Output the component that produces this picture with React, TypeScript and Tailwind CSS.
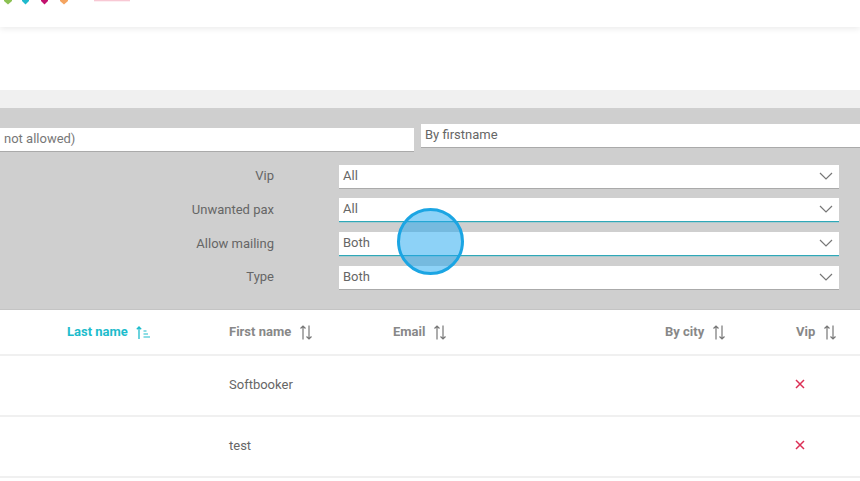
const filters = [
  { label: 'Vip', value: 'All', focused: false, mt: 'mt-[13px]', labelClass: 'mb-[2px]' },
  { label: 'Unwanted pax', value: 'All', focused: true, mt: 'mt-[9px]', labelClass: 'mb-0' },
  { label: 'Allow mailing', value: 'Both', focused: true, mt: 'mt-[10px]', labelClass: 'mb-0' },
  { label: 'Type', value: 'Both', focused: false, mt: 'mt-[10px]', labelClass: 'mb-[2px]' },
];

const rows = ['Softbooker', 'test'];

function SortIcon() {
  return (
    <svg width="14" height="15" viewBox="0 0 14 15" fill="none" stroke="#777" strokeWidth="1.2" className="ml-[8px]">
      <path d="M4 14.500V1M1.500 3.500 4 1l2.500 2.500" />
      <path d="M10 .5V14M7.500 11.500 10 14l2.500-2.500" />
    </svg>
  );
}

function SortedIcon() {
  return (
    <svg width="14" height="13" viewBox="0 0 14 13" fill="none" stroke="#1cbccc" strokeWidth="1.300" className="ml-[8px]">
      <path d="M3 13V1M.8 3.200 3 1l2.200 2.200" />
      <path d="M7.500 5h3M7.500 8h4.500M7.500 11h6.500" strokeWidth="1.100" />
    </svg>
  );
}

function Chevron() {
  return (
    <svg width="14" height="8" viewBox="0 0 14 8" fill="none" stroke="#777" strokeWidth="1.2" className="mb-[2px]">
      <path d="M1 1l6 6 6-6" />
    </svg>
  );
}

function Logo() {
  return (
    <svg width="140" height="6" viewBox="0 0 140 6" className="block">
      <path d="M4 0h8v1l-4 3.500-4-3.500z" fill="#8cc152" />
      <path d="M22 0h7v1l-3.500 3.500L22 1z" fill="#1fb9cc" />
      <path d="M41 0h7v1l-3.500 3.500L41 1z" fill="#c2116e" />
      <path d="M60 0h8v1l-4 3.500-4-3.500z" fill="#f4a460" />
      <rect x="94" y="0" width="36" height="1.300" fill="#f8c8d4" />
    </svg>
  );
}

export default function App() {
  return (
    <div className="w-[860px] h-[481px] overflow-hidden bg-white relative font-['Roboto',sans-serif] text-[13px] text-[#666]">
      <div className="h-[27px] bg-white shadow-[0_2px_6px_rgba(0,0,0,0.08)] relative">
        <Logo />
      </div>
      <div className="h-[63px] bg-white" />
      <div className="h-[18px] bg-[#f0f0f0]" />

      <div className="h-[202px] bg-[#cfcfcf] border-b border-[#c4c4c4]">
        <div className="flex items-start pt-[16px]">
          <div className="mt-[4px] h-[24px] w-[414px] bg-white border-b border-[#aaaaaa] pl-[4px] leading-[21px] text-[#777]">
            not allowed)
          </div>
          <div className="ml-[7px] h-[24px] flex-1 bg-white border-b border-[#aaaaaa] pl-[4px] leading-[21px]">
            By firstname
          </div>
        </div>
        {filters.map((f) => (
          <div key={f.label} className={`flex items-center ${f.mt}`}>
            <div className={`w-[274px] text-right text-[#666] ${f.labelClass}`}>{f.label}</div>
            <div
              className={`ml-[65px] w-[500px] h-[24px] bg-white border-b flex items-center justify-between pl-[4px] pr-[6px] ${
                f.focused ? 'border-[#2fa8b8] shadow-[0_1px_0_rgba(31,185,204,0.2)]' : 'border-[#aaaaaa]'
              }`}
            >
              <span className="mb-[1px]">{f.value}</span>
              <Chevron />
            </div>
          </div>
        ))}
      </div>

      <div className="h-[46px] grid grid-cols-[162px_164px_272px_131px_1fr] pl-[67px] items-center border-b-2 border-[#f0f0f0] font-bold text-[#888] text-[13px]">
        <div className="flex items-center text-[#1cbccc]">
          Last name
          <SortedIcon />
        </div>
        <div className="flex items-center">
          First name
          <SortIcon />
        </div>
        <div className="flex items-center">
          Email
          <SortIcon />
        </div>
        <div className="flex items-center">
          By city
          <SortIcon />
        </div>
        <div className="flex items-center">
          Vip
          <SortIcon />
        </div>
      </div>
      {rows.map((name) => (
        <div
          key={name}
          className="h-[61px] grid grid-cols-[162px_164px_272px_131px_1fr] pl-[67px] items-center border-b-2 border-[#f0f0f0]"
        >
          <div />
          <div className="mb-[2px]">{name}</div>
          <div />
          <div />
          <div className="mb-[4px]">
            <svg width="10" height="10" viewBox="0 0 10 10" stroke="#dc2f55" strokeWidth="1.500" className="ml-[-1px]">
              <path d="M1 1l8 8M9 1l-8 8" />
            </svg>
          </div>
        </div>
      ))}

      <div className="absolute left-[397px] top-[208px] w-[67px] h-[67px] rounded-full border-[3px] border-[#1ba5e3] bg-[#1ba5f0]/50" />
    </div>
  );
}
